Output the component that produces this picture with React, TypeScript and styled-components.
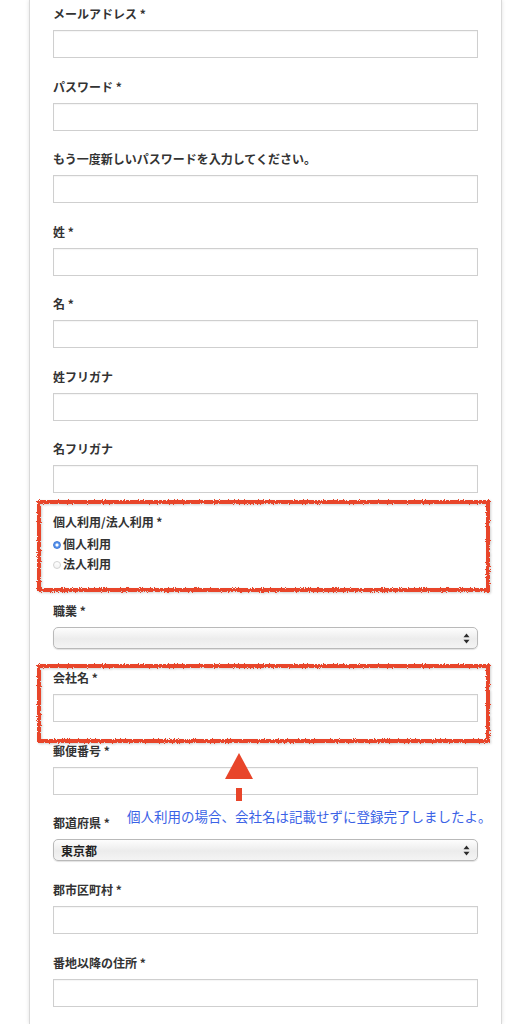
import React from "react";
import styled, { createGlobalStyle } from "styled-components";

const GlobalStyle = createGlobalStyle`
  html, body {
    margin: 0;
    padding: 0;
    background: #ffffff;
  }

  body {
    font-family: "Noto Sans CJK JP", "Noto Sans", sans-serif;
    color: #333333;
  }
`;

const Panel = styled.div`
  box-sizing: border-box;
  width: 473px;
  min-height: 1024px;
  margin-left: 29px;
  padding: 5px 23px 0;
  background: #ffffff;
  border-left: 1px solid #d9d9d9;
  border-right: 1px solid #d9d9d9;
  box-shadow: 0 0 4px rgba(0, 0, 0, 0.12);
`;

const Field = styled.div<{ $gap?: number }>`
  position: relative;
  margin-bottom: ${(p) => p.$gap ?? 19.5}px;
`;

const Label = styled.label`
  display: block;
  height: 18px;
  margin-bottom: 7px;
  font-size: 12px;
  line-height: 18px;
  font-weight: 700;
  color: #333333;
`;

const TextInput = styled.input`
  display: block;
  box-sizing: border-box;
  width: 100%;
  height: 28px;
  margin: 0;
  padding: 0 6px;
  border: 1px solid #cfcfcf;
  border-radius: 0;
  background: #ffffff;
  box-shadow: inset 0 1px 1px rgba(0, 0, 0, 0.04);
  outline: none;
`;

const SelectBox = styled.div`
  display: flex;
  align-items: center;
  justify-content: space-between;
  box-sizing: border-box;
  width: 100%;
  height: 22px;
  padding: 0 7px 0 7px;
  border: 1px solid #b9b9b9;
  border-radius: 5px;
  background: linear-gradient(to bottom, #fdfdfd 0%, #ececec 55%, #f4f4f4 100%);
  box-shadow: 0 1px 1px rgba(0, 0, 0, 0.12);
  font-size: 12px;
  font-weight: 700;
  color: #222222;
`;

const RadioList = styled.div`
  display: flex;
  flex-direction: column;
  margin-top: -4.5px;
`;

const RadioRow = styled.div`
  display: flex;
  align-items: center;
  gap: 2px;
  height: 20px;
  font-size: 12px;
  font-weight: 700;
  color: #333333;
`;

const RadioDot = styled.span<{ $checked?: boolean }>`
  box-sizing: border-box;
  width: 8px;
  height: 8px;
  margin-top: 3px;
  border-radius: 50%;
  border: 1px solid ${(p) => (p.$checked ? "#3a76d8" : "#d2d2d2")};
  background: ${(p) =>
    p.$checked
      ? "radial-gradient(circle, #ffffff 0 1.3px, #5a95ec 1.8px)"
      : "linear-gradient(#ffffff, #f2f2f2)"};
`;

const Highlight = styled.div<{ $top: number; $bottom: number }>`
  position: relative;

  &::before {
    content: "";
    position: absolute;
    top: ${(p) => p.$top}px;
    bottom: ${(p) => p.$bottom}px;
    left: -16px;
    right: -12px;
    border: 4px solid #e8452a;
    filter: url(#rough) drop-shadow(1px 1px 1px rgba(0, 0, 0, 0.18));
    pointer-events: none;
  }
`;

const Callout = styled.div`
  position: absolute;
  top: 11px;
  left: 74px;
  display: flex;
  flex-direction: column;
  gap: 7px;
  pointer-events: none;
`;

const ArrowMark = styled.svg`
  display: block;
  margin-left: 98px;
`;

const Note = styled.div`
  font-size: 13.5px;
  line-height: 16px;
  color: #3a62e6;
  white-space: nowrap;
`;

const Defs = styled.svg`
  display: block;
  width: 0;
  height: 0;
  overflow: hidden;
`;

function Chevrons() {
  return (
    <svg width="7" height="11" viewBox="0 0 7 11">
      <path d="M3.5 0.5 L6.5 4.3 H0.5 Z" fill="#2b2b2b" />
      <path d="M3.5 10.5 L6.5 6.7 H0.5 Z" fill="#2b2b2b" />
    </svg>
  );
}

function TextField({ label }: { label: string }) {
  return (
    <Field>
      <Label>{label}</Label>
      <TextInput type="text" />
    </Field>
  );
}

export default function App() {
  return (
    <>
      <GlobalStyle />
      <Defs aria-hidden="true">
        <filter id="rough">
          <feTurbulence type="fractalNoise" baseFrequency="0.8" numOctaves="2" result="noise" />
          <feDisplacementMap in="SourceGraphic" in2="noise" scale="3.5" />
        </filter>
      </Defs>
      <Panel>
        <TextField label="メールアドレス *" />
        <TextField label="パスワード *" />
        <TextField label="もう一度新しいパスワードを入力してください。" />
        <TextField label="姓 *" />
        <TextField label="名 *" />
        <TextField label="姓フリガナ" />
        <TextField label="名フリガナ" />

        <Highlight $top={-13} $bottom={-19}>
          <Field $gap={29}>
            <Label>個人利用/法人利用 *</Label>
            <RadioList>
              <RadioRow>
                <RadioDot $checked />
                個人利用
              </RadioRow>
              <RadioRow>
                <RadioDot />
                法人利用
              </RadioRow>
            </RadioList>
          </Field>
        </Highlight>

        <Field $gap={20}>
          <Label>職業 *</Label>
          <SelectBox>
            <span />
            <Chevrons />
          </SelectBox>
        </Field>

        <Highlight $top={-5} $bottom={-21}>
          <TextField label="会社名 *" />
        </Highlight>

        <Field>
          <Label>郵便番号 *</Label>
          <TextInput type="text" />
          <Callout>
            <ArrowMark width="28" height="48" viewBox="0 0 28 48">
              <polygon points="14,0 28,26 0,26" fill="#e8452a" />
              <rect x="11" y="35" width="6" height="13" fill="#e8452a" />
            </ArrowMark>
            <Note>個人利用の場合、会社名は記載せずに登録完了しましたよ。</Note>
          </Callout>
        </Field>

        <Field $gap={20}>
          <Label>都道府県 *</Label>
          <SelectBox>
            <span>東京都</span>
            <Chevrons />
          </SelectBox>
        </Field>

        <TextField label="郡市区町村 *" />
        <TextField label="番地以降の住所 *" />
      </Panel>
    </>
  );
}
